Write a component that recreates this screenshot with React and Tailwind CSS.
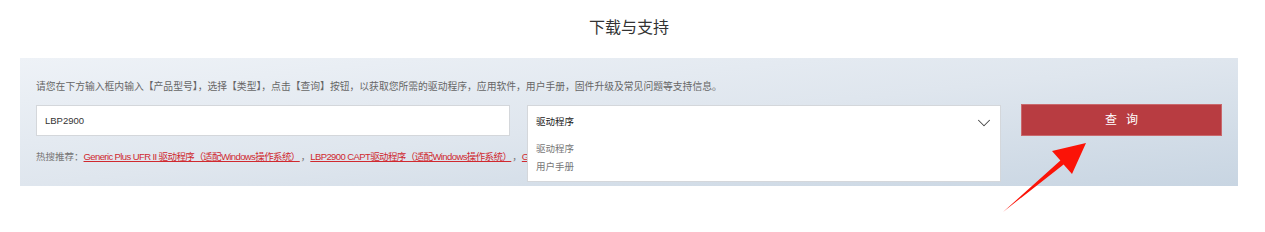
import { ChevronDown } from "lucide-react";

const HOT_LINKS = [
  "Generic Plus UFR II 驱动程序（适配Windows操作系统）",
  "LBP2900 CAPT驱动程序（适配Windows操作系统）",
  "Generic Plus PCL6 驱动程序（适配Windows操作系统）",
];

const TYPES = ["驱动程序", "用户手册"];

const font = { fontFamily: '"Liberation Sans", "Noto Sans CJK SC", sans-serif' };

export default function App() {
  return (
    <div className="relative w-[1265px] h-[232px] bg-white overflow-hidden" style={font}>
      {/* Title */}
      <div className="pt-[18px] w-[1218px] ml-[20px] text-center text-[16px] leading-[20px] text-[#333]">
        下载与支持
      </div>

      {/* Search panel */}
      <div className="mt-[20px] ml-[20px] w-[1218px] h-[128px] px-[16px] pt-[22px] bg-gradient-to-br from-[#eef2f7] via-[#dfe6ee] to-[#c8d5e2]">
        <p className="text-[9.8px] leading-[13px] text-[#666] whitespace-nowrap">
          请您在下方输入框内输入【产品型号】，选择【类型】，点击【查询】按钮，以获取您所需的驱动程序，应用软件，用户手册，固件升级及常见问题等支持信息。
        </p>

        <div className="mt-[12px] flex items-start">
          <input
            type="text"
            defaultValue="LBP2900"
            className="w-[474px] h-[31px] border border-[#d4d7db] bg-white px-[8px] text-[9.5px] text-[#333] outline-none"
          />

          {/* Type select, opened */}
          <div className="relative ml-[17px] w-[474px] h-[31px]">
            <div className="absolute left-0 top-0 z-10 w-full h-[77px] border border-[#d4d7db] bg-white">
              <div className="flex items-center justify-between h-[33px] pl-[8px] pr-[5px]">
                <span className="text-[9.5px] text-[#222]">驱动程序</span>
                <ChevronDown size={22} strokeWidth={1.1} className="text-[#444]" />
              </div>
              <ul className="pl-[8px] text-[9.5px] text-[#777]">
                {TYPES.map((t) => (
                  <li key={t} className="h-[17px] leading-[17px] mt-[1px]">{t}</li>
                ))}
              </ul>
            </div>
          </div>

          <button className="ml-[20px] -mt-[1px] w-[201px] h-[32px] bg-[#b83c41] border border-[#c9686c] text-white text-[12px] tracking-[9px] pl-[9px]">
            查询
          </button>
        </div>

        {/* Hot searches (the open select covers the tail) */}
        <div className="mt-[14px] w-[491px] overflow-hidden flex items-center text-[9.5px] leading-[14px] whitespace-nowrap">
          <span className="text-[#777]">热搜推荐：</span>
          {HOT_LINKS.map((l) => (
            <span key={l} className="flex items-center">
              <a href="#" className="text-[#d0292f] underline tracking-[-0.6px]">{l}</a>
              <span className="text-[#777] pl-[1px]">，</span>
            </span>
          ))}
        </div>
      </div>

      {/* Red arrow pointing at the button */}
      <svg className="absolute left-0 top-0 pointer-events-none z-20" width="1265" height="232">
        <polygon
          points="1003,212 1060.4,160.6 1052,151 1086,143 1072,174 1063.6,164.4"
          fill="#fb1307"
        />
      </svg>
    </div>
  );
}
